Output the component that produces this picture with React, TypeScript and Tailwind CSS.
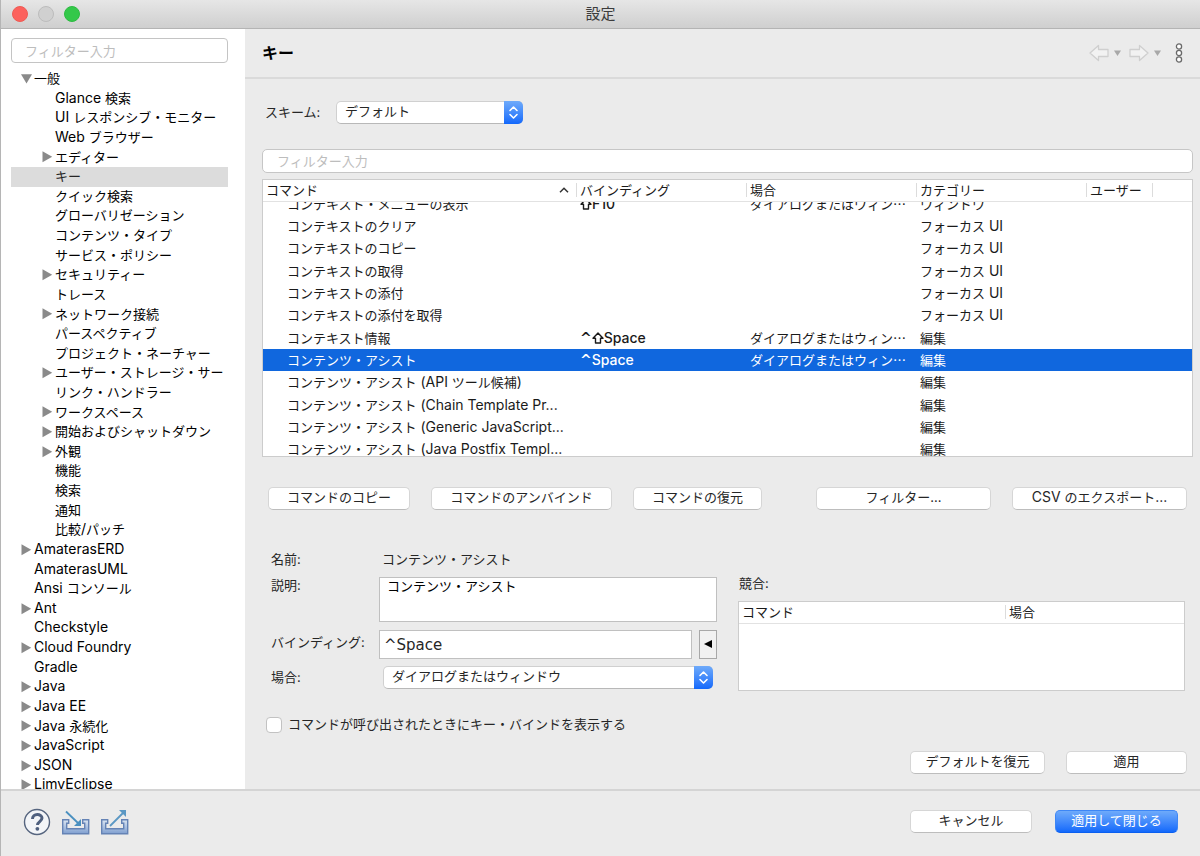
import React, { useLayoutEffect, useRef } from 'react';
import clsx from 'clsx';

interface TreeItem {
  label: string;
  level: 0 | 1;
  state?: 'open' | 'closed';
}

const tree: TreeItem[] = [
  { label: '一般', level: 0, state: 'open' },
  { label: 'Glance 検索', level: 1 },
  { label: 'UI レスポンシブ・モニター', level: 1 },
  { label: 'Web ブラウザー', level: 1 },
  { label: 'エディター', level: 1, state: 'closed' },
  { label: 'キー', level: 1 },
  { label: 'クイック検索', level: 1 },
  { label: 'グローバリゼーション', level: 1 },
  { label: 'コンテンツ・タイプ', level: 1 },
  { label: 'サービス・ポリシー', level: 1 },
  { label: 'セキュリティー', level: 1, state: 'closed' },
  { label: 'トレース', level: 1 },
  { label: 'ネットワーク接続', level: 1, state: 'closed' },
  { label: 'パースペクティブ', level: 1 },
  { label: 'プロジェクト・ネーチャー', level: 1 },
  { label: 'ユーザー・ストレージ・サー', level: 1, state: 'closed' },
  { label: 'リンク・ハンドラー', level: 1 },
  { label: 'ワークスペース', level: 1, state: 'closed' },
  { label: '開始およびシャットダウン', level: 1, state: 'closed' },
  { label: '外観', level: 1, state: 'closed' },
  { label: '機能', level: 1 },
  { label: '検索', level: 1 },
  { label: '通知', level: 1 },
  { label: '比較/パッチ', level: 1 },
  { label: 'AmaterasERD', level: 0, state: 'closed' },
  { label: 'AmaterasUML', level: 0 },
  { label: 'Ansi コンソール', level: 0 },
  { label: 'Ant', level: 0, state: 'closed' },
  { label: 'Checkstyle', level: 0 },
  { label: 'Cloud Foundry', level: 0, state: 'closed' },
  { label: 'Gradle', level: 0 },
  { label: 'Java', level: 0, state: 'closed' },
  { label: 'Java EE', level: 0, state: 'closed' },
  { label: 'Java 永続化', level: 0, state: 'closed' },
  { label: 'JavaScript', level: 0, state: 'closed' },
  { label: 'JSON', level: 0, state: 'closed' },
  { label: 'LimyEclipse', level: 0, state: 'closed' },
];

interface Command {
  name: string;
  modifiers?: string[];
  keyName?: string;
  when?: string;
  category: string;
}

const commands: Command[] = [
  { name: 'コンテキスト・メニューの表示', modifiers: ['shift'], keyName: 'F10', when: 'ダイアログまたはウィン…', category: 'ウィンドウ' },
  { name: 'コンテキストのクリア', category: 'フォーカス UI' },
  { name: 'コンテキストのコピー', category: 'フォーカス UI' },
  { name: 'コンテキストの取得', category: 'フォーカス UI' },
  { name: 'コンテキストの添付', category: 'フォーカス UI' },
  { name: 'コンテキストの添付を取得', category: 'フォーカス UI' },
  { name: 'コンテキスト情報', modifiers: ['ctrl', 'shift'], keyName: 'Space', when: 'ダイアログまたはウィン…', category: '編集' },
  { name: 'コンテンツ・アシスト', modifiers: ['ctrl'], keyName: 'Space', when: 'ダイアログまたはウィン…', category: '編集' },
  { name: 'コンテンツ・アシスト (API ツール候補)', category: '編集' },
  { name: 'コンテンツ・アシスト (Chain Template Pr...', category: '編集' },
  { name: 'コンテンツ・アシスト (Generic JavaScript...', category: '編集' },
  { name: 'コンテンツ・アシスト (Java Postfix Templ...', category: '編集' },
];

// Latin runs are set one size up so they sit evenly beside the kana
const Label: React.FC<{ text: string }> = ({ text }) => (
  <span>
    {text.split(/([ -~]+)/).map((run, idx) =>
      idx % 2 === 1 ? <span key={idx} className="text-sm leading-none">{run}</span> : run
    )}
  </span>
);

interface MacButtonProps {
  children: React.ReactNode;
  className?: string;
  primary?: boolean;
}

const MacButton: React.FC<MacButtonProps> = ({ children, className, primary }) => (
  <button
    type="button"
    className={clsx(
      'flex h-[23px] shrink-0 items-center justify-center rounded-[5px] border pb-0.5 whitespace-nowrap',
      primary
        ? 'border-[#3d86f5] border-b-[#0a5ff0] bg-linear-to-b from-[#6eaafa] to-[#1168fb] text-white'
        : 'border-[#d6d6d6] border-b-[#bdbdbd] bg-white text-[#262626]',
      className
    )}
  >
    {children}
  </button>
);

interface MacSelectProps {
  id: string;
  value: string;
  className?: string;
}

const MacSelect: React.FC<MacSelectProps> = ({ id, value, className }) => (
  <div className={clsx('relative h-[23px]', className)}>
    <select
      id={id}
      className="block h-full w-full appearance-none rounded-[5px] border border-[#d0d0d0] border-b-[#b8b8b8] bg-white pr-6 pb-0.5 pl-2 text-[#262626]"
    >
      <option>{value}</option>
    </select>
    <span className="pointer-events-none absolute inset-y-0 right-0 flex w-[19px] items-center justify-center rounded-r-[5px] bg-linear-to-b from-[#6eaafa] to-[#1168fb]">
      <svg width="11" height="15" viewBox="0 0 11 15" fill="none" stroke="white" strokeWidth="1.6" strokeLinecap="round" strokeLinejoin="round">
        <path d="M2 5.5 5.5 2 9 5.5M2 9.5 5.5 13 9 9.5" />
      </svg>
    </span>
  </div>
);

const Disclosure: React.FC<{ state?: 'open' | 'closed' }> = ({ state }) => (
  <svg width="12" height="12" viewBox="0 0 12 12" fill="#8a8a8a" className="mr-px shrink-0">
    {state === 'open' && <path d="M0 1.2h11L5.5 10.5z" />}
    {state === 'closed' && <path d="M0.5 0.3v11L10.2 5.8z" />}
  </svg>
);

const Sidebar: React.FC = () => (
  <aside className="flex w-[244px] shrink-0 flex-col overflow-hidden bg-white px-2.5 pt-[9px]">
    <input
      type="text"
      aria-label="フィルター入力"
      placeholder="フィルター入力"
      className="mr-[7px] h-[25px] shrink-0 rounded-[4px] border border-[#c4c4c4] bg-white px-[13px] placeholder:text-[#bdbdbd]"
    />
    {/* Page tree */}
    <ul className="mt-1.5 mr-[7px] grid h-[726px] shrink-0 auto-rows-fr">
      {tree.map((item) => (
        <li
          key={item.label}
          className={clsx(
            'flex items-center overflow-hidden whitespace-nowrap',
            item.level === 0 ? 'pl-2.5' : 'pl-[31px]',
            item.label === 'キー' ? 'bg-[#dcdcdc] text-[#262626]' : 'text-black'
          )}
        >
          <Disclosure state={item.state} />
          <Label text={item.label} />
        </li>
      ))}
    </ul>
  </aside>
);

const HeaderCell: React.FC<{ children?: React.ReactNode; sorted?: boolean; last?: boolean }> = ({ children, sorted, last }) => (
  <th className="sticky top-0 h-[22px] border-b border-[#e2e2e2] bg-white p-0 text-left font-normal text-[#1a1a1a]">
    <div className="flex h-[21px] items-center pb-0.5 pl-[3px]">
      <span className="flex-1 leading-4">{children}</span>
      {sorted && (
        <svg width="10" height="6" viewBox="0 0 10 6" fill="none" stroke="#333" strokeWidth="1.5" className="mr-[7px]">
          <path d="M1 5.2 5 1.2 9 5.2" />
        </svg>
      )}
      {!last && <span className="h-3.5 w-px bg-[#dcdcdc]" />}
    </div>
  </th>
);

const Modifier: React.FC<{ name: string }> = ({ name }) =>
  name === 'ctrl' ? (
    <span className="font-['DejaVu_Sans',sans-serif] font-bold">^</span>
  ) : (
    <svg width="12" height="12" viewBox="0 0 12 12" fill="none" stroke="currentColor" strokeWidth="1.4" strokeLinejoin="round" role="img" aria-label="Shift">
      <path d="M6 1 11 6.300H8.500V11h-5V6.300H1z" />
    </svg>
  );

const CommandTable: React.FC = () => {
  const pane = useRef<HTMLDivElement>(null);

  // the list opens scrolled a little past its first row
  useLayoutEffect(() => {
    if (pane.current) pane.current.scrollTop = 9;
  }, []);

  return (
    <div ref={pane} className="mt-1.5 h-[278px] overflow-hidden border border-[#cccccc] bg-white">
      <table className="h-[290px] w-full table-fixed border-separate border-spacing-0">
        <colgroup>
          <col className="w-[314px]" />
          <col className="w-[170px]" />
          <col className="w-[170px]" />
          <col className="w-[170px]" />
          <col className="w-[66px]" />
          <col />
        </colgroup>
        <thead>
          <tr>
            <HeaderCell sorted>コマンド</HeaderCell>
            <HeaderCell>バインディング</HeaderCell>
            <HeaderCell>場合</HeaderCell>
            <HeaderCell>カテゴリー</HeaderCell>
            <HeaderCell>ユーザー</HeaderCell>
            <HeaderCell last />
          </tr>
        </thead>
        <tbody>
          {commands.map((command) => (
            <tr
              key={command.name}
              className={clsx(
                'whitespace-nowrap leading-5 [&>td]:border-b [&>td]:border-white [&>td]:py-0 [&>td]:pr-0',
                command.name === 'コンテンツ・アシスト' ? 'bg-[#1067de] text-white' : 'text-[#1a1a1a]'
              )}
            >
              <td className="overflow-hidden pl-6">
                <Label text={command.name} />
              </td>
              <td className="pl-[3px]">
                <div className="flex items-center text-sm leading-5 font-medium">
                  {command.modifiers?.map((modifier) => <Modifier key={modifier} name={modifier} />)}
                  {command.keyName}
                </div>
              </td>
              <td className="pl-[3px] font-['Noto_Sans_CJK_JP',sans-serif]">{command.when}</td>
              <td className="pl-[3px]">
                <Label text={command.category} />
              </td>
              <td />
              <td />
            </tr>
          ))}
        </tbody>
      </table>
    </div>
  );
};

const BindingForm: React.FC = () => (
  <div className="mt-[39px] flex pr-2 pl-[9px]">
    <div className="grid w-[446px] shrink-0 grid-cols-[108px_1fr]">
      <span className="flex h-[26px] items-center pb-1">名前:</span>
      <span className="flex h-[26px] items-center pb-1 pl-[3px]">コンテンツ・アシスト</span>

      <label htmlFor="description" className="leading-4">説明:</label>
      <textarea
        id="description"
        readOnly
        defaultValue="コンテンツ・アシスト"
        className="block h-[45px] w-full resize-none border border-[#c0c0c0] bg-white px-[7px] py-0 leading-4 text-black"
      />

      <label htmlFor="binding" className="mt-1.5 flex h-[29px] items-center pb-0.5">バインディング:</label>
      <div className="mt-1.5 flex gap-[7px]">
        <input
          id="binding"
          type="text"
          defaultValue="^Space"
          className="h-[29px] min-w-0 flex-1 border border-[#c0c0c0] bg-white px-1 pt-0.5 font-['DejaVu_Sans',sans-serif] text-[15px]"
        />
        <button type="button" aria-label="キーの追加" className="flex h-[29px] w-[18px] items-center justify-center border border-[#a8a8a8] bg-[#f1f1f1]">
          <svg width="8" height="8" viewBox="0 0 8 8">
            <path d="M8 0v8L0 4z" />
          </svg>
        </button>
      </div>

      <label htmlFor="when" className="mt-1.5 flex h-[23px] items-center">場合:</label>
      <MacSelect id="when" value="ダイアログまたはウィンドウ" className="mt-1.5 mr-1 ml-1" />
    </div>

    {/* Conflicts */}
    <div className="ml-[21px] min-w-0 flex-1 pt-6">
      <p className="pl-px leading-5">競合:</p>
      <div className="mt-2 h-[90px] border border-[#cccccc] bg-white">
        <table className="w-full table-fixed border-separate border-spacing-0" aria-label="競合">
          <colgroup>
            <col className="w-3/5" />
            <col />
          </colgroup>
          <thead>
            <tr>
              <HeaderCell>コマンド</HeaderCell>
              <HeaderCell last>場合</HeaderCell>
            </tr>
          </thead>
        </table>
      </div>
    </div>
  </div>
);

const HistoryArrow: React.FC<{ forward?: boolean; label: string }> = ({ forward, label }) => (
  <button type="button" aria-label={label} className="flex items-center gap-[5px]">
    <svg width="20" height="18" viewBox="0 0 20 18" fill="#f2f2f2" stroke="#cfcfcf" strokeWidth="1.3" strokeLinejoin="round">
      {forward ? (
        <path d="M1 5.5h9.5V1.5L19 9l-8.500 7.500V12.500H1z" />
      ) : (
        <path d="M19 5.500H9.500V1.500L1 9l8.500 7.500V12.500H19z" />
      )}
    </svg>
    <svg width="7" height="6" viewBox="0 0 7 6" fill="#a8a8a8">
      <path d="M0 0.500h7L3.500 6z" />
    </svg>
  </button>
);

const TrayIcon: React.FC<{ out?: boolean }> = ({ out }) => (
  <svg width="30" height="27" viewBox="0 0 30 27" fill="none">
    <defs>
      <linearGradient id="tray" x1="0" y1="0" x2="0" y2="1">
        <stop offset="0" stopColor="#dce6f2" />
        <stop offset="1" stopColor="#7f9fd0" />
      </linearGradient>
    </defs>
    <path d="M1.700 11.700h6v3.500h-2v5.500h18v-5.500h-2v-3.500h6v14h-26z" fill="url(#tray)" stroke="#6583b5" strokeWidth="1.400" />
    {out ? (
      <>
        <path d="M10 18 23 5" stroke="#5b98c4" strokeWidth="1.800" />
        <path d="M19 2h7v7z" fill="#5b98c4" />
      </>
    ) : (
      <>
        <path d="M5 3.500 17 15" stroke="#4a90c0" strokeWidth="1.800" />
        <path d="M20 11v7h-7z" fill="#4a90c0" />
      </>
    )}
  </svg>
);

const App: React.FC = () => (
  <div
    lang="ja"
    className="flex h-screen flex-col overflow-hidden border-l border-[#b5b5b5] bg-[#ebebeb] font-['Inter','Noto_Sans_CJK_JP',sans-serif] text-[13px] text-[#262626]"
  >
    {/* Title bar */}
    <header className="grid h-[29px] shrink-0 grid-cols-[1fr_auto_1fr] items-center border-b border-[#b4b4b4] bg-linear-to-b from-[#e6e6e6] to-[#cfcfcf] px-[11px]">
      <div className="flex gap-2.5">
        <button type="button" aria-label="閉じる" className="size-4 rounded-full border border-[#ee5b54] bg-[#fc615d]" />
        <button type="button" aria-label="しまう" className="size-4 rounded-full border border-[#bcbcbc] bg-[#d0d0d0]" />
        <button type="button" aria-label="拡大" className="size-4 rounded-full border border-[#2dbb42] bg-[#34c84a]" />
      </div>
      <h1 className="pt-px text-[15px] text-[#3c3c3c]">設定</h1>
    </header>

    <div className="flex min-h-0 flex-1">
      <Sidebar />

      <main className="flex min-w-0 flex-1 flex-col">
        <div className="flex h-[50px] shrink-0 items-center border-b-2 border-[#dadada] pr-[17px] pl-[17px]">
          <h2 className="flex-1 text-base font-bold text-black">キー</h2>
          <div className="flex items-center gap-2">
            <HistoryArrow label="戻る" />
            <HistoryArrow label="進む" forward />
            <button type="button" aria-label="メニュー" className="ml-1.5">
              <svg width="8" height="20" viewBox="0 0 8 20" fill="white" stroke="#6a6a6a" strokeWidth="1.300">
                <circle cx="4" cy="3.500" r="2.600" />
                <circle cx="4" cy="10" r="2.600" />
                <circle cx="4" cy="16.500" r="2.600" />
              </svg>
            </button>
          </div>
        </div>

        <div className="flex flex-1 flex-col pt-[22px] pr-[7px] pl-[17px]">
          <div className="flex items-center pl-[3px]">
            <label htmlFor="scheme" className="w-[71px]">スキーム:</label>
            <MacSelect id="scheme" value="デフォルト" className="w-[187px]" />
          </div>

          <input
            type="text"
            aria-label="コマンドのフィルター入力"
            placeholder="フィルター入力"
            className="mt-[25px] h-6 shrink-0 rounded-[5px] border border-[#c6c6c6] bg-white px-3.5 placeholder:text-[#bdbdbd]"
          />

          <CommandTable />

          <div className="mt-[30px] flex gap-[21px] pr-1.5 pl-1.5">
            <MacButton className="w-[142px]">コマンドのコピー</MacButton>
            <MacButton className="w-[181px]">コマンドのアンバインド</MacButton>
            <MacButton className="mr-auto w-[129px]">コマンドの復元</MacButton>
            <MacButton className="w-[175px]">フィルター...</MacButton>
            <MacButton className="w-[175px]">
              <Label text="CSV のエクスポート..." />
            </MacButton>
          </div>

          <BindingForm />

          <label className="mt-6 flex items-center gap-1.5 pl-1">
            <input type="checkbox" className="size-4 appearance-none rounded-[4px] border border-[#c2c2c2] bg-white" />
            コマンドが呼び出されたときにキー・バインドを表示する
          </label>

          <div className="mt-auto flex justify-end gap-[21px] pr-1.5 pb-[15px]">
            <MacButton className="w-[135px]">デフォルトを復元</MacButton>
            <MacButton className="w-[121px]">適用</MacButton>
          </div>
        </div>
      </main>
    </div>

    <footer className="flex h-[67px] shrink-0 items-center border-t-2 border-[#d4d4d4] pr-[22px] pb-1 pl-[22px]">
      <button type="button" aria-label="ヘルプ">
        <svg width="28" height="28" viewBox="0 0 28 28" fill="none">
          <circle cx="14" cy="14" r="12.500" fill="#f3f5f8" stroke="#56657f" strokeWidth="1.400" />
          <path d="M9.500 11c0-6 9.500-5.500 9.500-1 0 3.500-4.500 3.600-4.500 7" stroke="#4f607f" strokeWidth="3" />
          <circle cx="14.400" cy="20.800" r="1.900" fill="#4f607f" />
        </svg>
      </button>
      <button type="button" aria-label="設定のインポート" className="ml-2.5">
        <TrayIcon />
      </button>
      <button type="button" aria-label="設定のエクスポート" className="ml-[9px]">
        <TrayIcon out />
      </button>
      <div className="ml-auto flex gap-[23px]">
        <MacButton className="w-[122px]">キャンセル</MacButton>
        <MacButton primary className="w-[123px]">適用して閉じる</MacButton>
      </div>
    </footer>
  </div>
);

export default App;
